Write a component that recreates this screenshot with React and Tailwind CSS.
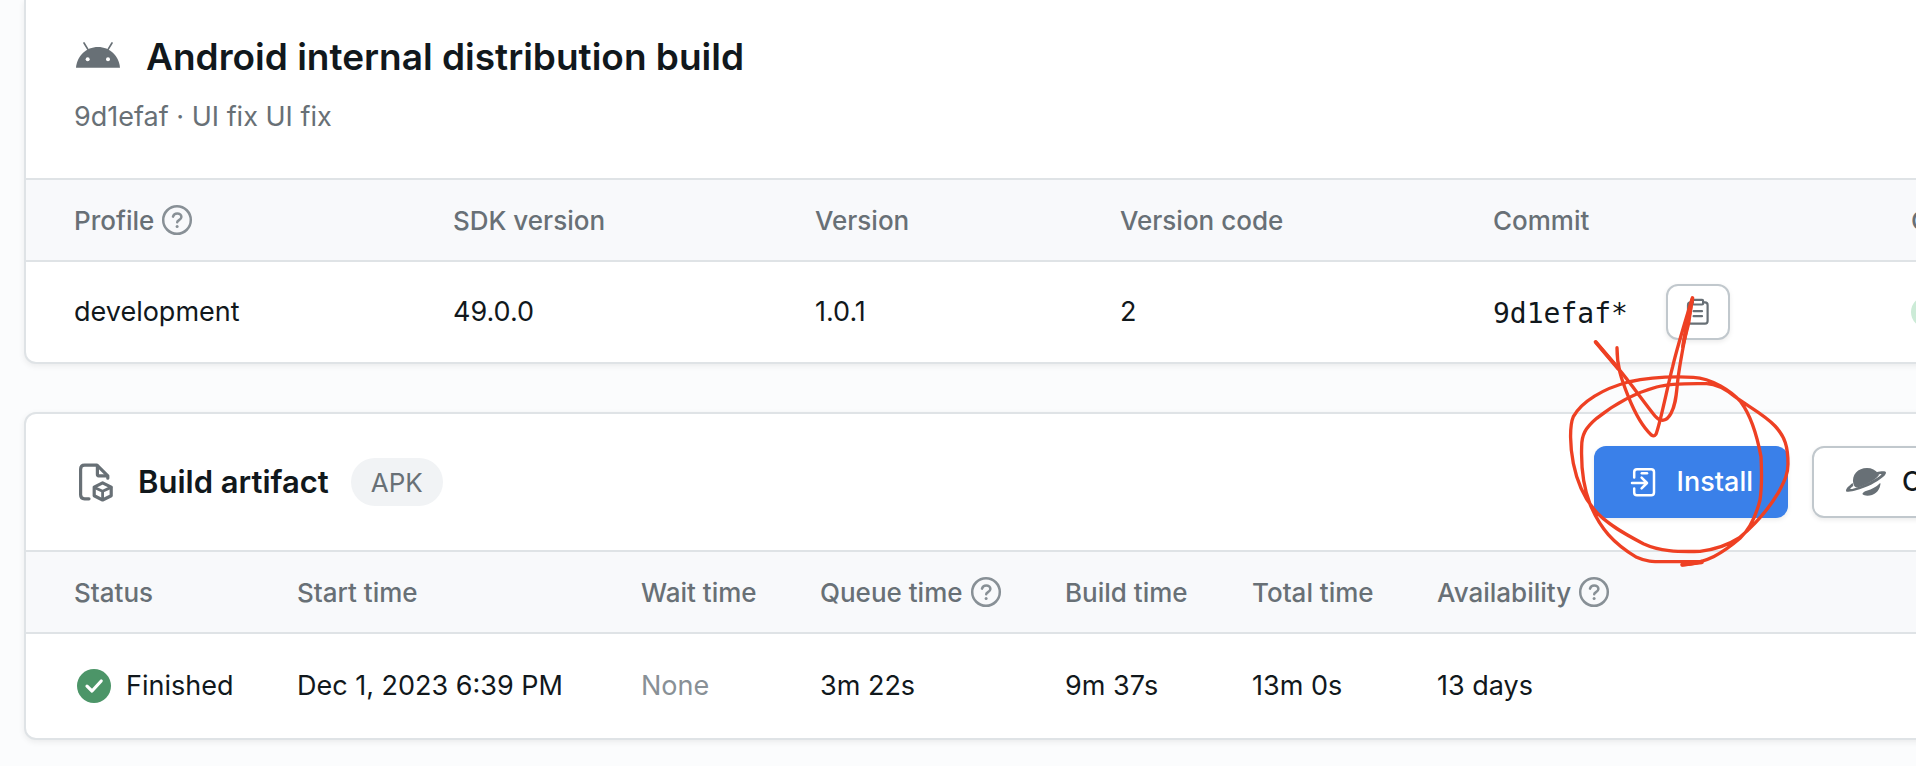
function AndroidIcon() {
  return (
    <svg className="h-7 w-11 shrink-0 overflow-visible text-[#687076]" viewBox="0 0 132 84" aria-hidden="true">
      <path d="M0 74C3 39 30 12 66 12s63 27 66 62z" fill="currentColor" />
      <path d="M24 0l14 23M108 0L94 23" stroke="currentColor" strokeWidth="5" strokeLinecap="round" />
      <circle cx="35" cy="49" r="6" fill="#fff" />
      <circle cx="96" cy="49" r="6" fill="#fff" />
    </svg>
  );
}

function HelpIcon() {
  return (
    <svg className="size-8 shrink-0 text-[#889096]" viewBox="0 0 32 32" fill="none" stroke="currentColor" strokeWidth="2.5" strokeLinecap="round" strokeLinejoin="round" aria-hidden="true">
      <circle cx="16" cy="16" r="13.8" />
      <path d="M12 12.6c.6-2.100 2.200-3.200 4.200-3.200 2.400 0 4.200 1.600 4.200 3.700 0 2.700-4.200 3.200-4.200 5.100" />
      <circle cx="16.1" cy="22.600" r="1.500" fill="currentColor" stroke="none" />
    </svg>
  );
}

function ArtifactIcon() {
  return (
    <svg className="size-10 shrink-0 text-[#687076]" viewBox="0 0 40 40" fill="none" stroke="currentColor" strokeWidth="3.2" strokeLinecap="round" strokeLinejoin="round" aria-hidden="true">
      <path d="M15 36.800h-4.400c-2.500 0-4-1.600-4-4V7.200c0-2.500 1.600-4 4-4H23l10.800 10.600v2.400" />
      <path d="M23.400 4v8.600c0 .8.4 1.200 1.200 1.200H33" />
      <path d="M28.600 20.800l8.600 4.400v8.600l-8.600 4.200-8.400-4.200v-8.600z" />
      <path d="M20.400 25.400l8.200 3.800 8.400-3.800M28.600 29.400v8" strokeWidth="2.800" />
    </svg>
  );
}

function CheckBadge() {
  return (
    <svg className="size-[34px] shrink-0" viewBox="0 0 34 34" fill="none" aria-hidden="true">
      <circle cx="17" cy="17" r="17" fill="#4c9568" />
      <path d="M10 17.200l5 4.800 9.200-10" stroke="#fff" strokeWidth="3.200" strokeLinecap="round" strokeLinejoin="round" />
    </svg>
  );
}

function ClipboardIcon() {
  return (
    <svg className="size-7" viewBox="0 0 28 28" fill="none" stroke="currentColor" strokeWidth="2.2" strokeLinecap="round" strokeLinejoin="round" aria-hidden="true">
      <path d="M9 4.400H6.600c-1.500 0-2.600 1.100-2.600 2.600v16c0 1.500 1.100 2.600 2.600 2.600h14.400c1.500 0 2.600-1.100 2.600-2.600V7c0-1.500-1.100-2.600-2.600-2.600H19" />
      <path d="M9.500 1.900h8.600c.6 0 1 .4 1 1v2.600c0 .6-.4 1-1 1H9.500c-.6 0-1-.4-1-1V2.900c0-.6.4-1 1-1z" />
      <path d="M9.600 13.200h8.400M9.600 18.200h8.400" />
    </svg>
  );
}

function InstallIcon() {
  return (
    <svg className="h-8 w-7" viewBox="0 0 28 32" fill="none" stroke="currentColor" strokeWidth="2.5" strokeLinecap="round" strokeLinejoin="round" aria-hidden="true">
      <path d="M5.200 11.400V6c0-1.800 1-2.800 2.800-2.800h14.200c1.800 0 2.800 1 2.800 2.800v20.400c0 1.800-1 2.800-2.800 2.800H8c-1.800 0-2.800-1-2.800-2.800V22.600" />
      <path d="M12.800 7.300h5.200" />
      <path d="M3 17h14.400M12.600 11.600l5.400 5.400-5.400 5.400" />
    </svg>
  );
}

function OrbitIcon() {
  return (
    <svg className="h-7 w-10 shrink-0 text-[#687076]" viewBox="0 0 120 84" fill="currentColor" aria-hidden="true">
      <path d="M22 47C16 20 36 0 63 0c14 0 26 6 34 17 2 3 2 5-1 8C84 38 58 52 37 58c-8 2-13-3-15-11z" />
      <path d="M49 78c3-6 6-8 13-10 16-5 29-12 38-21 3-2 4-1 3 3-3 20-19 33-39 33-6 0-12-1-15-5z" />
      <path d="M0 68c0-7 8-14 20-23l2 9c-7 5-10 8-9 9 6 2 28-6 50-17 26-13 45-25 43-27-1-1-4-1-9 1l-6-7c16-4 29-4 29 1 0 10-27 27-55 41C37 67 0 77 0 68z" />
    </svg>
  );
}

/* Hand-drawn circle and arrow that call out the install button. */
function InstallMarkup() {
  return (
    <svg className="pointer-events-none absolute -left-[34px] -top-[156px] h-[284px] w-[240px] max-w-none" viewBox="360 330 720 852" fill="none" stroke="#ee4023" strokeWidth="10" strokeLinecap="round" strokeLinejoin="round" aria-hidden="true">
      <path d="M467 486L530 560C570 606 610 665 645 708C662 728 680 724 693 700C712 664 708 630 717 574C728 500 746 420 758 354" />
      <path d="M531 503C531 560 543 595 565 650C583 695 607 740 634 765C642 770 648 767 650 757C664 715 682 622 698 560C712 500 737 420 757 354" />
      <path d="M756 360L738 440L728 500L746 430Z" fill="#ee4023" />
      <path d="M467 486L535 566" strokeWidth="12" />
      <path d="M726 1155C800 1150 850 1118 900 1075C935 1042 950 1000 960 960C967 915 965 870 963 830C950 760 928 700 902 665C875 635 815 594 760 592C700 589 630 592 565 606C490 626 425 664 400 710C388 738 390 800 400 850C410 900 430 950 462 988C495 1030 560 1065 610 1091C660 1114 710 1116 780 1114C820 1109 860 1098 897 1074C950 1030 990 980 1015 938C1032 905 1044 885 1044 852C1044 800 1035 770 1005 738C975 705 925 680 885 650C860 630 830 612 800 611C740 610 690 610 650 621C580 640 520 675 470 715C435 745 425 765 425 800C423 860 430 920 450 972C480 1045 520 1090 590 1132C620 1146 640 1145 680 1145H785" />
      <path d="M728 1153L785 1146" strokeWidth="13" />
    </svg>
  );
}

const buildColumns = [
  { label: "Profile", help: true, width: "w-[427px]" },
  { label: "SDK version", width: "w-[362px]" },
  { label: "Version", width: "w-[305px]" },
  { label: "Version code", width: "w-[373px]" },
  { label: "Commit", width: "w-[418px]" },
  { label: "Created by", width: "w-auto" },
];

const artifactColumns = [
  { label: "Status", width: "w-[271px]" },
  { label: "Start time", width: "w-[344px]" },
  { label: "Wait time", width: "w-[179px]" },
  { label: "Queue time", help: true, width: "w-[245px]" },
  { label: "Build time", width: "w-[187px]" },
  { label: "Total time", width: "w-[185px]" },
  { label: "Availability", help: true, width: "w-auto" },
];

function DataTable({ label, columns, children }) {
  return (
    <table aria-label={label} className="w-full table-fixed border-collapse text-left text-[27px] whitespace-nowrap">
      <colgroup>
        {columns.map((c) => (
          <col key={c.label} className={c.width} />
        ))}
      </colgroup>
      <thead>
        <tr className="h-[82px] border-y-2 border-[#dfe3e6] bg-[#f8f9fb] text-[26px] text-[#687076]">
          {columns.map((c) => (
            <th key={c.label} scope="col" className="p-0 font-medium first:pl-12">
              <span className="flex items-center gap-[7px]">
                {c.label}
                {c.help && <HelpIcon />}
              </span>
            </th>
          ))}
        </tr>
      </thead>
      <tbody>{children}</tbody>
    </table>
  );
}

export default function App() {
  return (
    <main className="min-h-screen overflow-x-hidden bg-[#fbfcfd] pl-6 font-['Inter',sans-serif] text-[#11181c]">
      <div className="-mr-[276px] flex flex-col gap-12 pb-6">
        <section className="rounded-b-xl border-2 border-t-0 border-[#dfe3e6] bg-white shadow-[0_2px_6px_rgba(0,0,0,0.07)]">
          <header className="px-12 pt-8 pb-[41px]">
            <div className="flex items-center gap-[26px] pl-0.5">
              <AndroidIcon />
              <h1 className="text-[37px] leading-[50px] font-semibold">Android internal distribution build</h1>
            </div>
            <p className="mt-[15px] text-[27px] leading-10 text-[#687076]">9d1efaf · UI fix UI fix</p>
          </header>
          <DataTable label="Build details" columns={buildColumns}>
            <tr className="h-[101px]">
              <td className="p-0 pl-12">development</td>
              <td className="p-0">49.0.0</td>
              <td className="p-0">1.0.1</td>
              <td className="p-0">2</td>
              <td className="p-0">
                <div className="flex items-center gap-[38px]">
                  <span className="pt-1 font-['DejaVu_Sans_Mono',monospace] text-[28px]">9d1efaf*</span>
                  <button type="button" aria-label="Copy commit hash" className="flex h-14 w-16 items-center justify-center rounded-xl border-2 border-[#c1c8cd] bg-white text-[#687076] shadow-[0_2px_5px_rgba(0,0,0,0.08)]">
                    <ClipboardIcon />
                  </button>
                </div>
              </td>
              <td className="p-0">
                <span className="block size-8 rounded-full bg-[#ccebd7]" />
              </td>
            </tr>
          </DataTable>
        </section>

        <section className="rounded-xl border-2 border-[#dfe3e6] bg-white shadow-[0_2px_6px_rgba(0,0,0,0.07)]">
          <header className="flex items-center justify-between px-12 py-8">
            <div className="flex items-center">
              <ArtifactIcon />
              <h2 className="ml-6 text-[31px] leading-10 font-semibold">Build artifact</h2>
              <span className="ml-[22px] flex h-12 items-center rounded-full bg-[#f1f3f5] px-5 text-[26px] text-[#687076]">APK</span>
            </div>
            <div className="flex gap-6 text-[27px] font-medium">
              <div className="relative">
                <button type="button" className="flex h-[72px] items-center gap-5 rounded-xl bg-[#3a80e9] px-[35px] text-white shadow-[0_2px_5px_rgba(0,0,0,0.08)]">
                  <InstallIcon />
                  Install
                </button>
                <InstallMarkup />
              </div>
              <button type="button" className="flex h-[72px] w-[330px] items-center gap-4 rounded-xl border-2 border-[#c1c8cd] bg-white px-8 whitespace-nowrap shadow-[0_2px_5px_rgba(0,0,0,0.08)]">
                <OrbitIcon />
                Open with Orbit
              </button>
            </div>
          </header>
          <DataTable label="Artifact details" columns={artifactColumns}>
            <tr className="h-[105px]">
              <td className="p-0 pl-12">
                <span className="flex items-center gap-[15px] pl-[3px]">
                  <CheckBadge />
                  Finished
                </span>
              </td>
              <td className="p-0">Dec 1, 2023 6:39 PM</td>
              <td className="p-0 text-[#889096]">None</td>
              <td className="p-0">3m 22s</td>
              <td className="p-0">9m 37s</td>
              <td className="p-0">13m 0s</td>
              <td className="p-0">13 days</td>
            </tr>
          </DataTable>
        </section>
      </div>
    </main>
  );
}
